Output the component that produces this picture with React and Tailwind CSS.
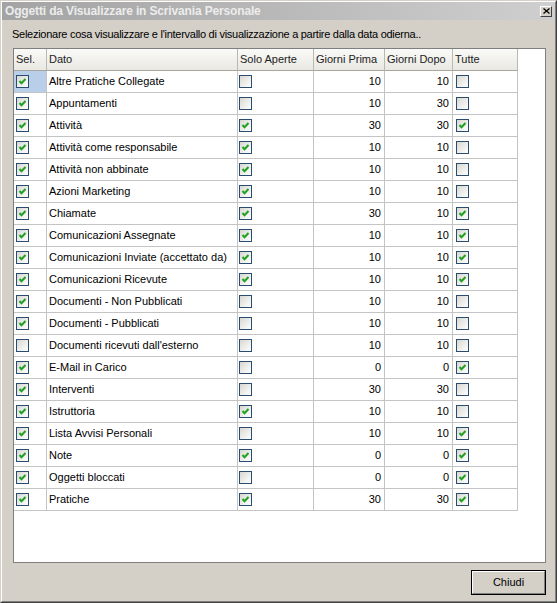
import React from "react";

const rows = [
  ["Altre Pratiche Collegate", true, false, 10, 10, false],
  ["Appuntamenti", true, false, 10, 30, false],
  ["Attività", true, true, 30, 30, true],
  ["Attività come responsabile", true, true, 10, 10, false],
  ["Attività non abbinate", true, true, 10, 10, false],
  ["Azioni Marketing", true, true, 10, 10, false],
  ["Chiamate", true, true, 30, 10, true],
  ["Comunicazioni Assegnate", true, true, 10, 10, true],
  ["Comunicazioni Inviate (accettato da)", true, true, 10, 10, true],
  ["Comunicazioni Ricevute", true, true, 10, 10, true],
  ["Documenti - Non Pubblicati", true, false, 10, 10, false],
  ["Documenti - Pubblicati", true, false, 10, 10, false],
  ["Documenti ricevuti dall'esterno", false, false, 10, 10, false],
  ["E-Mail in Carico", true, false, 0, 0, true],
  ["Interventi", true, false, 30, 30, false],
  ["Istruttoria", true, true, 10, 10, false],
  ["Lista Avvisi Personali", true, false, 10, 10, true],
  ["Note", true, true, 0, 0, true],
  ["Oggetti bloccati", true, false, 0, 0, true],
  ["Pratiche", true, true, 30, 30, true],
];

const Check = ({ on }) => (
  <span className="w-[13px] h-[13px] shrink-0 border border-[#2a4c70] bg-linear-to-br from-[#d8d8d2] to-white flex items-center justify-center">
    {on && (
      <svg width="11" height="11" viewBox="0 0 11 11">
        <polyline
          points="2.5,5 4.5,7.2 8.5,3"
          fill="none"
          stroke="#21a121"
          strokeWidth="2"
        />
      </svg>
    )}
  </span>
);

const cell = "h-full border-r border-[#c4c4c4] flex items-center";

const App = () => {
  return (
    <div
      className="w-[557px] h-[603px] bg-[#d4d0c8] flex flex-col border border-[#d4d0c8] border-r-[#404040] border-b-[#404040] text-[11px] text-black"
      style={{ fontFamily: '"Liberation Sans", Arial, sans-serif' }}
    >
      <div className="flex-1 flex flex-col border border-white border-r-[#808080] border-b-[#808080]">
        {/* title bar */}
        <div className="h-[18px] flex items-center justify-between bg-linear-to-r from-[#a3a3a3] to-[#cfcfcf] pl-[3px] pr-[3px]">
          <span className="text-[12px] font-bold text-[#ececec] tracking-[-0.15px]">
            Oggetti da Visualizzare in Scrivania Personale
          </span>
          <span className="w-[12px] h-[11px] bg-[#d4d0c8] border border-white border-r-[#404040] border-b-[#404040] flex items-center justify-center">
            <svg width="7" height="6" viewBox="0 0 7 6">
              <path d="M0.5 0.5 L6.5 5.5 M6.5 0.5 L0.5 5.5" stroke="#000" strokeWidth="1.3" />
            </svg>
          </span>
        </div>

        <div className="pt-[8px] pl-[10px] leading-[13px] tracking-[-0.27px]">
          Selezionare cosa visualizzare e l'intervallo di visualizzazione a partire dalla data odierna..
        </div>

        {/* grid */}
        <div className="mt-[7px] ml-[11px] w-[533px] h-[515px] bg-white border border-[#7f7f7f] flex flex-col">
          <div className="h-[22px] flex shrink-0">
            {[
              ["Sel.", "w-[33px]"],
              ["Dato", "w-[191px]"],
              ["Solo Aperte", "w-[76px]"],
              ["Giorni Prima", "w-[71px]"],
              ["Giorni Dopo", "w-[68px]"],
              ["Tutte", "w-[65px]"],
            ].map(([t, w]) => (
              <div
                key={t}
                className={`${w} h-full pl-[2px] flex items-center border-r border-[#b9b9b4] border-b border-b-[#a8a79f] bg-linear-to-b from-[#fafaf8] to-[#e9e8e2] text-[#222]`}
              >
                {t}
              </div>
            ))}
          </div>
          {rows.map(([name, sel, solo, prima, dopo, tutte], i) => (
            <div key={name} className="h-[22px] flex shrink-0">
              <div className="w-[504px] h-full flex border-b border-[#c4c4c4]">
                <div className={`${cell} w-[33px] pl-[2px] ${i === 0 ? "bg-[#b8cee9]" : ""}`}>
                  <Check on={sel} />
                </div>
                <div className={`${cell} w-[191px] pl-[2px]`}>{name}</div>
                <div className={`${cell} w-[76px] pl-[1px]`}>
                  <Check on={solo} />
                </div>
                <div className={`${cell} w-[71px] justify-end pr-[3px]`}>{prima}</div>
                <div className={`${cell} w-[68px] justify-end pr-[3px]`}>{dopo}</div>
                <div className={`${cell} w-[65px] pl-[3px]`}>
                  <Check on={tutte} />
                </div>
              </div>
            </div>
          ))}
        </div>

        <div className="mt-[7px] flex justify-end pr-[9px]">
          <button className="w-[75px] h-[25px] border border-black bg-[#d4d0c8] p-0">
            <span className="w-full h-full flex items-center justify-center border border-white border-r-[#808080] border-b-[#808080]">
              Chiudi
            </span>
          </button>
        </div>
      </div>
    </div>
  );
};

export default App;
